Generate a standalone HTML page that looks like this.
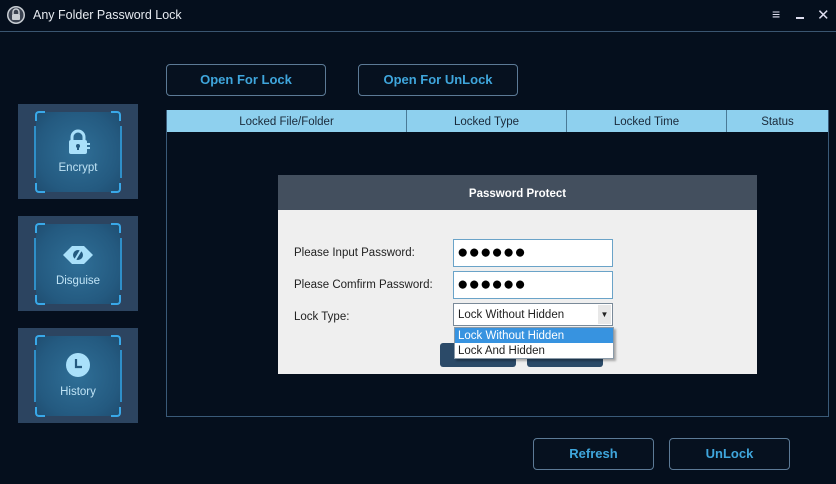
<!DOCTYPE html>
<html><head><meta charset="utf-8"><style>
*{margin:0;padding:0;box-sizing:border-box}
body{width:836px;height:484px;background:#050f1d;font-family:"Liberation Sans",sans-serif;position:relative;overflow:hidden}
.abs{position:absolute}
.title{left:33px;top:8px;color:#e6eaf0;font-size:12.5px}
.hline{left:0;top:31px;width:836px;height:1px;background:#3a5570}
.btn{position:absolute;border:1.5px solid #5c7a96;border-radius:4px;color:#3fa6dc;font-weight:bold;font-size:13px;text-align:center;background:#06111f}
.tile{position:absolute;left:18px;width:120px;height:95px;background:#2c4460}
.inner{position:absolute;left:18px;top:8px;width:84px;height:80px;background:radial-gradient(circle,#2f6f97 0%,#245a80 70%,#1f4d70 100%);border-radius:4px}
.c{position:absolute;width:10px;height:10px;border-color:#39a8e8;border-style:solid}
.tl{left:-1px;top:-1px;border-width:2px 0 0 2px;border-radius:4px 0 0 0}
.tr{right:-1px;top:-1px;border-width:2px 2px 0 0;border-radius:0 4px 0 0}
.bl{left:-1px;bottom:-1px;border-width:0 0 2px 2px;border-radius:0 0 0 4px}
.br{right:-1px;bottom:-1px;border-width:0 2px 2px 0;border-radius:0 0 4px 0}
.sl{position:absolute;left:-2px;top:14px;width:2px;height:52px;background:#2f8fc8}
.sr{position:absolute;right:-2px;top:14px;width:2px;height:52px;background:#2f8fc8}
.lbl{position:absolute;left:0;width:84px;text-align:center;color:#bfe3f5;font-size:11.5px}
.th{position:absolute;top:110px;height:22px;background:#8ed0ee;color:#1a2a3a;font-size:11.5px;text-align:center;line-height:24px;border-right:1px solid #4a7a96}
.lab{position:absolute;left:294px;font-size:11.5px;color:#222}
.inp{position:absolute;left:453px;width:160px;height:28px;background:#fff;border:1.5px solid #6aa3c8}
.dots{position:absolute;left:3px;top:2px;font-size:19px;letter-spacing:0;color:#000}
</style></head><body>
<svg class="abs" style="left:6px;top:5px" width="20" height="20" viewBox="0 0 20 20"><circle cx="10" cy="10" r="9" fill="#c9ced4"/><circle cx="10" cy="10" r="7.5" fill="#3a4250"/><path d="M7 9V7a3 3 0 0 1 6 0v2" stroke="#c9ced4" stroke-width="1.5" fill="none"/><rect x="6" y="9" width="8" height="6" rx="1" fill="#c9ced4"/></svg>
<div class="abs title">Any Folder Password Lock</div>
<div class="abs" style="left:772px;top:6px;color:#dde;font-size:14px">≡</div>
<div class="abs" style="left:796px;top:17px;width:8px;height:2px;background:#dde"></div>
<div class="abs" style="left:817px;top:6px;color:#dde;font-size:15px">✕</div>
<div class="abs hline"></div>

<div class="btn" style="left:166px;top:64px;width:160px;height:32px;line-height:29px">Open For Lock</div>
<div class="btn" style="left:358px;top:64px;width:160px;height:32px;line-height:29px">Open For UnLock</div>

<div class="tile" style="top:104px"><div class="inner"><div class="c tl"></div><div class="c tr"></div><div class="c bl"></div><div class="c br"></div><div class="sl"></div><div class="sr"></div>
<svg class="abs" style="left:29px;top:16px" width="28" height="28" viewBox="0 0 28 28"><path d="M7 13V9a6 6 0 0 1 12 0v4" stroke="#a9e0fa" stroke-width="3" fill="none"/><rect x="4" y="12" width="18" height="14" rx="2" fill="#a9e0fa"/><circle cx="13" cy="18" r="2" fill="#245a80"/><rect x="12" y="18" width="2" height="4" fill="#245a80"/><rect x="22" y="15" width="3" height="2" fill="#a9e0fa"/><rect x="22" y="19" width="3" height="2" fill="#a9e0fa"/></svg>
<div class="lbl" style="top:50px">Encrypt</div></div></div>

<div class="tile" style="top:216px"><div class="inner"><div class="c tl"></div><div class="c tr"></div><div class="c bl"></div><div class="c br"></div><div class="sl"></div><div class="sr"></div>
<svg class="abs" style="left:26px;top:20px" width="32" height="22" viewBox="0 0 32 22"><path d="M1 11L10 2H22L31 11L22 20H10Z" fill="#a9e0fa"/><circle cx="16" cy="11" r="5" fill="#245a80"/><path d="M13 16L19 6" stroke="#a9e0fa" stroke-width="2"/></svg>
<div class="lbl" style="top:51px">Disguise</div></div></div>

<div class="tile" style="top:328px"><div class="inner"><div class="c tl"></div><div class="c tr"></div><div class="c bl"></div><div class="c br"></div><div class="sl"></div><div class="sr"></div>
<svg class="abs" style="left:29px;top:16px" width="26" height="26" viewBox="0 0 26 26"><circle cx="13" cy="13" r="12" fill="#a9e0fa"/><path d="M11 7V15H17" stroke="#245a80" stroke-width="2.2" fill="none"/></svg>
<div class="lbl" style="top:50px">History</div></div></div>

<div class="abs" style="left:166px;top:110px;width:663px;height:307px;border:1px solid #3a5a78"></div>
<div class="th" style="left:167px;width:240px">Locked File/Folder</div>
<div class="th" style="left:407px;width:160px">Locked Type</div>
<div class="th" style="left:567px;width:160px">Locked Time</div>
<div class="th" style="left:727px;width:101px;border-right:none">Status</div>

<div class="abs" style="left:278px;top:175px;width:479px;height:199px;background:#efefef"></div>
<div class="abs" style="left:278px;top:175px;width:479px;height:35px;background:#434f5e;color:#fff;font-weight:bold;font-size:11.5px;text-align:center;line-height:38px">Password Protect</div>
<div class="lab" style="top:247px">Please Input Password:</div>
<div class="lab" style="top:279px">Please Comfirm Password:</div>
<div class="lab" style="top:311px">Lock Type:</div>
<div class="inp" style="top:239px"><div class="dots">●●●●●●</div></div>
<div class="inp" style="top:271px"><div class="dots">●●●●●●</div></div>
<div class="abs" style="left:453px;top:303px;width:160px;height:23px;background:#fff;border:1px solid #7a8a99;font-size:11.5px;color:#222;padding:5px 0 0 4px">Lock Without Hidden<span style="position:absolute;right:1px;top:1px;width:13px;height:19px;background:#e8e8e8;font-size:8px;text-align:center;line-height:19px">▼</span></div>
<div class="abs" style="left:440px;top:343px;width:76px;height:24px;background:#2b4a68;border-radius:3px"></div>
<div class="abs" style="left:527px;top:343px;width:76px;height:24px;background:#2b4a68;border-radius:3px"></div>
<div class="abs" style="left:454px;top:327px;width:160px;height:32px;background:#fff;border:1px solid #8a9aa8;box-shadow:2px 2px 2px rgba(0,0,0,.3)">
<div style="height:15px;background:#3793e0;color:#fff;font-size:11.5px;padding-left:3px;line-height:16px">Lock Without Hidden</div>
<div style="height:15px;color:#222;font-size:11.5px;padding-left:3px;line-height:16px">Lock And Hidden</div></div>

<div class="btn" style="left:533px;top:438px;width:121px;height:32px;line-height:29px">Refresh</div>
<div class="btn" style="left:669px;top:438px;width:121px;height:32px;line-height:29px">UnLock</div>
</body></html>
